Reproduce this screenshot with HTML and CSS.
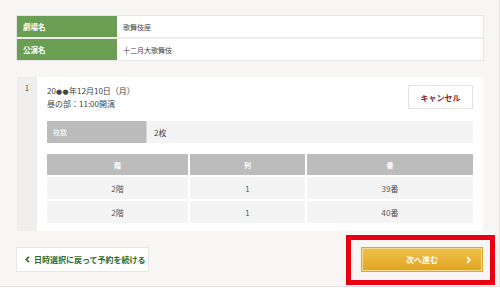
FILE: index.html
```html
<!DOCTYPE html>
<html lang="ja">
<head>
<meta charset="utf-8">
<link rel="stylesheet" href="styles.css">
</head>
<body>
<div class="page">
  <div class="info">
    <div class="info-row">
      <div class="info-label">劇場名</div>
      <div class="info-value">歌舞伎座</div>
    </div>
    <div class="info-row">
      <div class="info-label">公演名</div>
      <div class="info-value">十二月大歌舞伎</div>
    </div>
  </div>

  <div class="ticket">
    <div class="ticket-num">1</div>
    <div class="ticket-body">
      <div class="ticket-head">
        <div class="ticket-date">
          <div>20<span class="dots">●●</span>年12月10日（月）</div>
          <div>昼の部：11:00開演</div>
        </div>
        <button class="cancel">キャンセル</button>
      </div>
      <div class="count">
        <div class="count-label">枚数</div>
        <div class="count-value">2枚</div>
      </div>
      <div class="seats">
        <div class="seat-h">階</div>
        <div class="seat-h">列</div>
        <div class="seat-h">番</div>
        <div class="seat-c">2階</div>
        <div class="seat-c">1</div>
        <div class="seat-c">39番</div>
        <div class="seat-c">2階</div>
        <div class="seat-c">1</div>
        <div class="seat-c">40番</div>
      </div>
    </div>
  </div>

  <div class="actions">
    <button class="back">
      <svg class="back-icon" width="5" height="7" viewBox="0 0 5 7"><polyline points="4,0.8 1.2,3.5 4,6.2" fill="none" stroke="#2e6b1c" stroke-width="1.6"/></svg>
      日時選択に戻って予約を続ける
    </button>
    <div class="next-wrap">
      <button class="next">
        次へ進む
        <svg class="next-icon" width="5" height="8" viewBox="0 0 5 8"><polyline points="1,1 3.8,4 1,7" fill="none" stroke="#ffffff" stroke-width="1.7"/></svg>
      </button>
      <span class="highlight"></span>
    </div>
  </div>
</div>
</body>
</html>
```

FILE: styles.css
```css
* { box-sizing: border-box; }
html, body { margin: 0; padding: 0; background: #ffffff; }
body {
  font-family: "Noto Sans CJK JP", "Noto Sans", sans-serif;
  color: #333333;
}
.page {
  width: 500px;
  height: 287px;
  background: #f7f6f4;
  border-right: 1px solid #e6e4e1;
  border-bottom: 1px solid #e6e4e1;
  padding: 15px 16px 0 16px;
}
.info {
  background: #ececec;
  border: 1px solid #e6e6e6;
  display: flex;
  flex-direction: column;
  gap: 2px;
  width: 468px;
}
.info-row {
  display: grid;
  grid-template-columns: 100px 1fr;
  height: 21px;
}
.info-label {
  background: #6a9f53;
  color: #ffffff;
  font-weight: bold;
  font-size: 7.5px;
  padding-left: 6px;
  display: flex;
  align-items: center;
}
.info-value {
  background: #ffffff;
  font-size: 7px;
  padding-left: 6px;
  display: flex;
  align-items: center;
  color: #444444;
}
.ticket {
  margin-top: 16px;
  margin-left: 1px;
  width: 466px;
  display: flex;
  background: #ffffff;
}
.ticket-num {
  width: 20px;
  background: #efeeec;
  font-size: 7px;
  text-align: center;
  padding-top: 6px;
  color: #444444;
}
.ticket-body {
  flex: 1;
  padding: 8px 10px 8px 10px;
}
.ticket-head {
  display: flex;
  justify-content: space-between;
  align-items: flex-start;
}
.ticket-date {
  font-size: 8px;
  line-height: 12px;
  color: #444444;
}
.dots {
  font-family: "DejaVu Sans", sans-serif;
  font-size: 7px;
  letter-spacing: 0.5px;
}
.cancel {
  width: 65px;
  height: 24px;
  background: #ffffff;
  border: 1px solid #e3e3e3;
  color: #8a1f2d;
  font-family: inherit;
  font-weight: bold;
  font-size: 8px;
  padding: 0;
}
.count {
  margin-top: 11px;
  display: grid;
  grid-template-columns: 100px 1fr;
  height: 22px;
  background: #f4f4f4;
}
.count-label {
  background: #bbbbbb;
  color: #ffffff;
  font-size: 7px;
  padding-left: 6px;
  display: flex;
  align-items: center;
  border-right: 1px solid #d8d8d8;
}
.count-value {
  font-size: 8px;
  padding-left: 7px;
  display: flex;
  align-items: center;
  color: #444444;
}
.seats {
  margin-top: 11px;
  display: grid;
  grid-template-columns: 141px 115px 1fr;
  grid-template-rows: 21px 22px 22px;
  gap: 2px;
}
.seat-h {
  background: #bcbcbc;
  color: #ffffff;
  font-weight: bold;
  font-size: 7px;
  display: flex;
  align-items: center;
  justify-content: center;
}
.seat-c {
  background: #f4f4f4;
  font-size: 8px;
  color: #555555;
  display: flex;
  align-items: center;
  justify-content: center;
}
.actions {
  margin-top: 16px;
  display: flex;
  justify-content: space-between;
  align-items: flex-start;
}
.back {
  height: 25px;
  width: 133px;
  background: #ffffff;
  border: 1px solid #e6e6e6;
  color: #2e6b1c;
  font-family: inherit;
  font-weight: bold;
  font-size: 8px;
  padding: 0 0 0 8px;
  display: flex;
  align-items: center;
  gap: 4px;
  white-space: nowrap;
}
.next-wrap {
  position: relative;
}
.next {
  position: relative;
  width: 122px;
  height: 25px;
  border: 1px solid #e0a52a;
  box-shadow: inset 0 0 0 1px #f8dc8e;
  background: linear-gradient(#efc04e, #e2a41f);
  color: #ffffff;
  font-family: inherit;
  font-weight: bold;
  font-size: 8px;
  padding: 0;
  display: flex;
  align-items: center;
  justify-content: center;
}
.next-icon {
  position: absolute;
  right: 11px;
  top: 8px;
}
.highlight {
  position: absolute;
  left: -15px;
  top: -12px;
  right: -12px;
  bottom: -13px;
  border: 5px solid #e60012;
  pointer-events: none;
}
```
